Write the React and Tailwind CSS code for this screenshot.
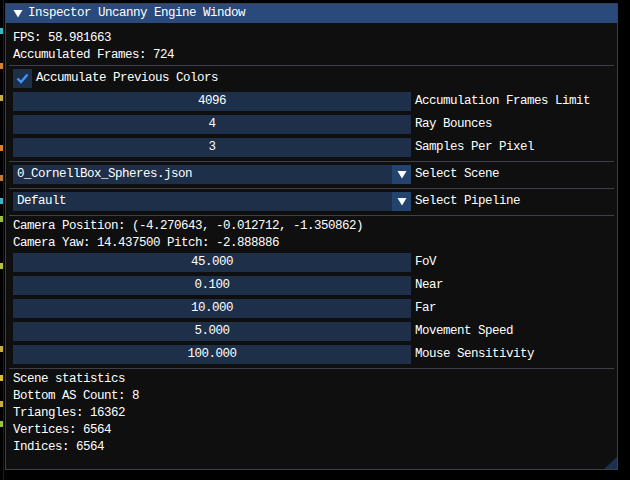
const font = { fontFamily: '"Liberation Mono", "DejaVu Sans Mono", monospace' }

const bgMarks = [
  { top: 28, color: 'bg-[#3bb6c8]' },
  { top: 63, color: 'bg-[#d9822b]' },
  { top: 95, color: 'bg-[#c8b040]' },
  { top: 145, color: 'bg-[#d9822b]' },
  { top: 175, color: 'bg-[#c07a3a]' },
  { top: 198, color: 'bg-[#3bb6c8]' },
  { top: 216, color: 'bg-[#9ac040]' },
  { top: 263, color: 'bg-[#b8c040]' },
  { top: 346, color: 'bg-[#c8b040]' },
  { top: 375, color: 'bg-[#d8c030]' },
  { top: 401, color: 'bg-[#c8b040]' },
  { top: 421, color: 'bg-[#9ac040]' },
]

function Text({ children }) {
  return <div className="h-[13px] leading-[15px] whitespace-pre">{children}</div>
}

function Separator() {
  return <div className="h-px -mb-px -ml-[4px] w-[605px] bg-[#3f3f47]" />
}

function Slider({ value, label }) {
  return (
    <div className="flex items-center h-[19px]">
      <div className="w-[398px] h-[19px] bg-[#1d2f49] flex items-center justify-center leading-[15px]">
        {value}
      </div>
      <span className="ml-[4px] leading-[15px]">{label}</span>
    </div>
  )
}

function Combo({ value, label }) {
  return (
    <div className="flex items-center h-[19px]">
      <div className="w-[398px] h-[19px] bg-[#1d2f49] flex items-center">
        <span className="flex-1 pl-[4px] leading-[15px]">{value}</span>
        <div className="w-[19px] h-[19px] bg-[#23456d] flex items-center justify-center">
          <svg width="10" height="9" viewBox="0 0 10 9">
            <polygon points="0.5,1 9.5,1 5,8.5" fill="#ffffff" />
          </svg>
        </div>
      </div>
      <span className="ml-[4px] leading-[15px]">{label}</span>
    </div>
  )
}

export default function App() {
  return (
    <div className="relative w-[630px] h-[480px] bg-black overflow-hidden text-white text-[12.5px] tracking-[-0.5px]" style={font}>
      {/* fragments of the window behind */}
      {bgMarks.map((m, i) => (
        <div key={i} className={`absolute left-0 w-[3px] h-[6px] ${m.color}`} style={{ top: m.top }} />
      ))}
      <div className="absolute left-[3px] top-0 w-px h-[480px] bg-[#1a1d24]" />

      <div className="absolute left-[5px] top-[3px] w-[613px] h-[467px] border border-[#3f3f47] bg-[#0f0f0f] flex flex-col">
        <div className="h-[19px] bg-[#294a7a] flex items-center pl-[7px]">
          <svg width="10" height="9" viewBox="0 0 10 9">
            <polygon points="0.5,1 9.5,1 5,8.5" fill="#ffffff" />
          </svg>
          <span className="ml-[5px] leading-[15px]">Inspector Uncanny Engine Window</span>
        </div>

        <div className="flex flex-col gap-[4px] pl-[7px] pt-[8px]">
          <Text>FPS: 58.981663</Text>
          <Text>Accumulated Frames: 724</Text>
          <Separator />
          <div className="flex items-center h-[19px]">
            <div className="w-[19px] h-[19px] bg-[#1d2f49] flex items-center justify-center">
              <svg width="13" height="11" viewBox="0 0 13 11">
                <polyline points="1.5,5.5 5,9 11.5,1.5" fill="none" stroke="#4296fa" strokeWidth="2.4" />
              </svg>
            </div>
            <span className="ml-[4px] leading-[15px]">Accumulate Previous Colors</span>
          </div>
          <Slider value="4096" label="Accumulation Frames Limit" />
          <Slider value="4" label="Ray Bounces" />
          <Slider value="3" label="Samples Per Pixel" />
          <Separator />
          <Combo value="0_CornellBox_Spheres.json" label="Select Scene" />
          <Separator />
          <Combo value="Default" label="Select Pipeline" />
          <Separator />
          <Text>Camera Position: (-4.270643, -0.012712, -1.350862)</Text>
          <Text>Camera Yaw: 14.437500 Pitch: -2.888886</Text>
          <Slider value="45.000" label="FoV" />
          <Slider value="0.100" label="Near" />
          <Slider value="10.000" label="Far" />
          <Slider value="5.000" label="Movement Speed" />
          <Slider value="100.000" label="Mouse Sensitivity" />
          <Separator />
          <Text>Scene statistics</Text>
          <Text>Bottom AS Count: 8</Text>
          <Text>Triangles: 16362</Text>
          <Text>Vertices: 6564</Text>
          <Text>Indices: 6564</Text>
        </div>

        {/* resize grip */}
        <svg className="absolute right-0 bottom-0" width="13" height="12" viewBox="0 0 13 12">
          <polygon points="13,0 13,12 0,12" fill="#1c3150" />
        </svg>
      </div>
    </div>
  )
}
